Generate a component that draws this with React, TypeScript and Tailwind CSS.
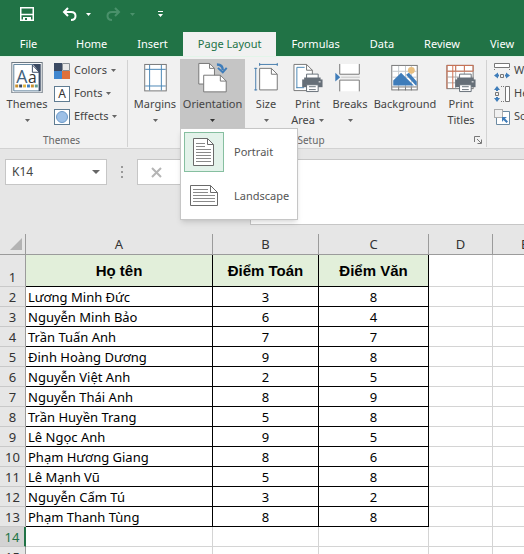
import { useState } from 'react'
import type { ReactNode } from 'react'

const tabs = ['Home', 'Insert', 'Page Layout', 'Formulas', 'Data', 'Review', 'View']

const students = [
  { name: 'Lương Minh Đức', math: 3, literature: 8 },
  { name: 'Nguyễn Minh Bảo', math: 6, literature: 4 },
  { name: 'Trần Tuấn Anh', math: 7, literature: 7 },
  { name: 'Đinh Hoàng Dương', math: 9, literature: 8 },
  { name: 'Nguyễn Việt Anh', math: 2, literature: 5 },
  { name: 'Nguyễn Thái Anh', math: 8, literature: 9 },
  { name: 'Trần Huyền Trang', math: 5, literature: 8 },
  { name: 'Lê Ngọc Anh', math: 9, literature: 5 },
  { name: 'Phạm Hương Giang', math: 8, literature: 6 },
  { name: 'Lê Mạnh Vũ', math: 5, literature: 8 },
  { name: 'Nguyễn Cẩm Tú', math: 3, literature: 2 },
  { name: 'Phạm Thanh Tùng', math: 8, literature: 8 },
]

const extraColumns = ['D', 'E', 'F', 'G', 'H', 'I', 'J', 'K', 'L', 'M']
const emptyRows = [14, 15, 16, 17, 18, 19, 20]

function Caret({ className = 'text-[#666]' }: { className?: string }) {
  return (
    <svg width="5" height="3" viewBox="0 0 5 3" className={className} fill="currentColor">
      <path d="M0 0h5L2.5 3z" />
    </svg>
  )
}

/* ---------- Ribbon icons ---------- */

function ThemesIcon() {
  return (
    <svg width="32" height="32" viewBox="0 0 32 32">
      <rect x="0.5" y="0.5" width="31" height="31" fill="#fff" stroke="#6b7680" />
      <path d="M2.5 2.5h26v27h-26z" fill="#fff" stroke="#5c7f99" />
      <path d="M22 2h8v28h-2V10z" fill="#3b4a63" />
      <path d="M21.5 3v7.5h7z" fill="#fff" stroke="#3b4a63" />
      <text x="5" y="21" fontSize="18" fill="#44627c" fontFamily="Open Sans, sans-serif">A</text>
      <text x="17" y="21" fontSize="16" fill="#333" fontFamily="Open Sans, sans-serif">a</text>
      <path d="M4 23h3v3H4z" fill="#c98f2b" />
      <path d="M8 23h3v3H8z" fill="#3b4a63" />
      <path d="M12 23h3v3h-3z" fill="#e3b53c" />
      <path d="M16 23h3v3h-3z" fill="#3f7fbf" />
      <path d="M20 23h3v3h-3z" fill="#c98f2b" />
      <path d="M24 23h3v3h-3z" fill="#5f9e8f" />
    </svg>
  )
}

function ColorsIcon() {
  return (
    <svg width="16" height="16" viewBox="0 0 16 16">
      <path d="M0 0h8v8H0z" fill="#3b4a63" />
      <path d="M8.5 .5h7v7h-7z" fill="#e9e9e9" stroke="#8a9096" />
      <path d="M0 8h8v8H0z" fill="#3f86cf" />
      <path d="M8 8h8v8H8z" fill="#e0703a" />
    </svg>
  )
}

function FontsIcon() {
  return (
    <svg width="16" height="16" viewBox="0 0 16 16">
      <rect x="0.5" y="0.5" width="15" height="15" fill="#fff" stroke="#5f7c92" />
      <text x="8" y="12" fontSize="12" textAnchor="middle" fill="#333" fontFamily="Noto Sans, sans-serif">A</text>
    </svg>
  )
}

function EffectsIcon() {
  return (
    <svg width="16" height="16" viewBox="0 0 16 16">
      <rect x="0.5" y="0.5" width="15" height="15" fill="#fff" stroke="#5f7c92" />
      <circle cx="8" cy="8" r="5.5" fill="#9dc0e6" stroke="#6d9bc9" />
    </svg>
  )
}

function MarginsIcon() {
  return (
    <svg width="32" height="32" viewBox="0 0 32 32" fill="none">
      <rect x="5.5" y="2.5" width="22" height="27" fill="#fff" stroke="#777" />
      <path d="M10.5 3v26M22.5 3v26M6 7.5h21M6 24.5h21" stroke="#4a86b5" />
    </svg>
  )
}

function OrientationIcon() {
  return (
    <svg width="32" height="32" viewBox="0 0 32 32">
      <path d="M1.5 1.5h11l5 5v16h-16z" fill="#fff" stroke="#777" />
      <path d="M12.5 1.5v5h5" fill="none" stroke="#777" />
      <path d="M6.5 13.5h17l6 6v11h-23z" fill="#fff" stroke="#777" />
      <path d="M23.5 13.5v6h6" fill="none" stroke="#777" />
      <path d="M20 2.5c4 0 6 2 6 6" fill="none" stroke="#3f7dba" strokeWidth="2.5" />
      <path d="M21 6l5 4.5L30 6" fill="none" stroke="#3f7dba" strokeWidth="2" />
    </svg>
  )
}

function SizeIcon() {
  return (
    <svg width="32" height="32" viewBox="0 0 32 32" fill="none">
      <path d="M9.5 6.5h12l6 6v16h-18z" fill="#fff" stroke="#777" />
      <path d="M21.5 6.5v6h6" stroke="#777" />
      <path d="M9 2.5h19M9.5 1v3M27.5 1v3M5.5 6v23M4 6.5h3M4 28.5h3" stroke="#4a7fae" />
    </svg>
  )
}

// Printer glyph shared by Print Area and Print Titles
function Printer() {
  return (
    <g>
      <path d="M14.5 12.5h12v7h-12z" fill="#fff" stroke="#666f78" />
      <path d="M10 18h21v8H10z" fill="#666f78" />
      <path d="M12 16h17v3H12z" fill="#666f78" />
      <path d="M27 20h2v1h-2z" fill="#fff" />
      <path d="M14.5 23.5h12v7h-12z" fill="#fff" stroke="#666f78" />
      <path d="M17 25.5h7M17 28.5h7" stroke="#666f78" />
    </g>
  )
}

function PrintAreaIcon() {
  return (
    <svg width="32" height="32" viewBox="0 0 32 32" fill="none">
      <path d="M1.5 2.5h13l6 6v21h-19z" fill="#fff" stroke="#777" />
      <path d="M14.5 2.5v6h6" stroke="#777" />
      <path d="M4.5 27V5.5h8M4 26.5h8" stroke="#4a86b5" />
      <Printer />
    </svg>
  )
}

function BreaksIcon() {
  return (
    <svg width="32" height="32" viewBox="0 0 32 32" fill="none">
      <path d="M6 2h20v11H6zM6 18h20v12H6z" fill="#fff" />
      <path d="M5.5 2v10.5h20V2M5.5 30V18.5h20V30" stroke="#777" />
      <path d="M7 15.5h19" stroke="#c5c5c5" />
      <path d="M1 11l5 4.5L1 20z" fill="#3f7dba" />
    </svg>
  )
}

function BackgroundIcon() {
  return (
    <svg width="32" height="32" viewBox="0 0 32 32" fill="none">
      <rect x="2.5" y="3.5" width="26" height="25" fill="#fff" stroke="#777" />
      <path d="M9.5 4v23M16.5 4v23M22.5 4v23M3 9.5h25M3 15.5h25" stroke="#c3c8cc" />
      <circle cx="22.5" cy="8.5" r="3.5" fill="#e8bf80" />
      <path d="M4 24v-5l8-8 13 13z" fill="#3f7dba" />
      <path d="M17 13l3-2 8 9v4h-1z" fill="#3f7dba" />
      <path d="M3 25.5h25" stroke="#777" />
      <path d="M9.5 26v3M16.5 26v3M22.5 26v3" stroke="#777" />
    </svg>
  )
}

function PrintTitlesIcon() {
  return (
    <svg width="32" height="32" viewBox="0 0 32 32" fill="none">
      <rect x="1.5" y="3.5" width="27" height="24" fill="#fff" stroke="#777" />
      <path d="M2 9.5h26M2 15.5h26M2 21.5h26M10.5 4v23M19.5 4v23" stroke="#aaa" />
      <path d="M1.5 27.5v-24h27v6h-27M7.5 4v23M10.5 4v5M19.5 4v5" stroke="#cf6f50" />
      <Printer />
    </svg>
  )
}

function WidthIcon() {
  return (
    <svg width="16" height="16" viewBox="0 0 16 16" fill="none">
      <path d="M.5.5h15v4H.5z" fill="#fff" stroke="#777" />
      <path d="M.5 6v2M15.5 6v2" stroke="#777" strokeDasharray="1 1" />
      <path d="M4 9.5L0 12.5l4 3zM12 9.5l4 3-4 3z" fill="#3f7dba" />
      <path d="M4 12.5h1M11 12.5h1" stroke="#3f7dba" strokeWidth="2" />
      <path d="M6.5 11.5h3v3h-3z" stroke="#777" />
    </svg>
  )
}

function HeightIcon() {
  return (
    <svg width="16" height="16" viewBox="0 0 16 16" fill="none">
      <path d="M11.5.5h4v15h-4z" fill="#fff" stroke="#777" />
      <path d="M7 .5h4M7 15.5h4" stroke="#777" strokeDasharray="1 1" />
      <path d="M0 4l3-4 3 4zM0 12l3 4 3-4z" fill="#3f7dba" />
      <path d="M3 4v1M3 11v1" stroke="#3f7dba" strokeWidth="2" />
      <path d="M1.5 6.5h3v3h-3z" stroke="#777" />
    </svg>
  )
}

function ScaleIcon() {
  return (
    <svg width="16" height="16" viewBox="0 0 16 16" fill="none">
      <path d="M9 2.5h6.5v13H2.5V9" fill="#fff" stroke="#6d8ba3" />
      <path d="M.5.5h8v8h-8z" fill="#f1f1f1" stroke="#666" strokeDasharray="1 1" />
      <path d="M8 8h5l-2 1.5 3 3-1.5 1.5-3-3L8 13z" fill="#3f7dba" />
    </svg>
  )
}

function PortraitIcon() {
  return (
    <svg width="30" height="30" viewBox="0 0 30 30" fill="none">
      <path d="M4.5 1.5h14l6 6v21h-20z" fill="#fff" stroke="#6a6a6a" />
      <path d="M18.5 1.5v6h6" stroke="#6a6a6a" />
      <path d="M7 6.5h9M7 9.5h9M7 12.5h15M7 15.5h15M7 18.5h15M7 21.5h15M7 24.5h15" stroke="#8a8a8a" />
    </svg>
  )
}

function LandscapeIcon() {
  return (
    <svg width="30" height="30" viewBox="0 0 30 30" fill="none">
      <path d="M1.5 4.5h20l7 7v13h-27z" fill="#fff" stroke="#6a6a6a" />
      <path d="M21.5 4.5v7h7" stroke="#6a6a6a" />
      <path d="M4 8.5h15M4 11.5h15M4 14.5h22M4 17.5h22M4 20.5h22" stroke="#8a8a8a" />
    </svg>
  )
}

/* ---------- Ribbon ---------- */

interface LargeButtonProps {
  icon: ReactNode
  label: string
  secondLine?: string
  caret?: boolean
  className?: string
  pressed?: boolean
  onClick?: () => void
}

function LargeButton({ icon, label, secondLine, caret, className = '', pressed, onClick }: LargeButtonProps) {
  return (
    <button
      type="button"
      onClick={onClick}
      aria-expanded={pressed}
      className={`flex h-[69px] shrink-0 flex-col items-center pt-[3px] ${pressed ? 'bg-[#c5c5c5]' : ''} ${className}`}
    >
      {icon}
      <span className="mt-[3px] leading-4">{label}</span>
      <span className="flex h-4 items-center gap-1 leading-4">
        {secondLine}
        {caret && <Caret className={pressed ? 'text-[#333]' : 'text-[#666]'} />}
      </span>
    </button>
  )
}

function SmallButton({ icon, label, caret }: { icon: ReactNode; label: string; caret?: boolean }) {
  return (
    <button type="button" className="flex h-[23px] items-center gap-1">
      {icon}
      <span>{label}</span>
      {caret && <Caret />}
    </button>
  )
}

function OrientationMenu({ value, onSelect }: { value: string; onSelect: (value: string) => void }) {
  const items = [
    { name: 'Portrait', icon: <PortraitIcon /> },
    { name: 'Landscape', icon: <LandscapeIcon /> },
  ]

  return (
    <div
      role="menu"
      className="absolute top-full left-0 z-20 flex w-[118px] flex-col gap-1 border border-[#c6c6c6] bg-white p-[3px] shadow-md"
    >
      {items.map(item => (
        <button
          key={item.name}
          type="button"
          role="menuitemradio"
          aria-checked={value === item.name}
          onClick={() => onSelect(item.name)}
          className="flex items-center gap-[10px] text-[#555]"
        >
          <span
            className={`flex size-10 shrink-0 items-center justify-center border ${
              value === item.name ? 'border-[#86bfa0] bg-[#e3f2ea]' : 'border-transparent'
            }`}
          >
            {item.icon}
          </span>
          {item.name}
        </button>
      ))}
    </div>
  )
}

function Ribbon() {
  const [menuOpen, setMenuOpen] = useState(true)
  const [orientation, setOrientation] = useState('Portrait')

  return (
    <div className="flex h-[93px] border-t border-b border-t-[#e2f5e9] border-b-[#d2d2d2] bg-[#f1f1f1] pt-[2px] text-[11px] text-[#444]">
      {/* Themes */}
      <section className="my-px flex w-32 shrink-0 flex-col border-r border-[#d2d2d2]">
        <div className="-mt-px flex">
          <LargeButton icon={<ThemesIcon />} label="Themes" caret className="w-[54px]" />
          <div className="flex flex-col">
            <SmallButton icon={<ColorsIcon />} label="Colors" caret />
            <SmallButton icon={<FontsIcon />} label="Fonts" caret />
            <SmallButton icon={<EffectsIcon />} label="Effects" caret />
          </div>
        </div>
        <div className="mt-1 pr-1 text-center text-[10px] leading-4 text-[#666]">Themes</div>
      </section>

      {/* Page Setup */}
      <section className="my-px flex w-[359px] shrink-0 flex-col border-r border-[#d2d2d2] pl-[2px]">
        <div className="-mt-px flex">
          <LargeButton icon={<MarginsIcon />} label="Margins" caret className="w-[50px]" />
          <div className="relative">
            <LargeButton
              icon={<OrientationIcon />}
              label="Orientation"
              caret
              pressed={menuOpen}
              onClick={() => setMenuOpen(o => !o)}
              className="w-[65px]"
            />
            {menuOpen && <OrientationMenu value={orientation} onSelect={setOrientation} />}
          </div>
          <LargeButton icon={<SizeIcon />} label="Size" caret className="w-[42px]" />
          <LargeButton icon={<PrintAreaIcon />} label="Print" secondLine="Area" caret className="w-[41px]" />
          <LargeButton icon={<BreaksIcon />} label="Breaks" caret className="w-[44px]" />
          <LargeButton icon={<BackgroundIcon />} label="Background" className="w-[66px]" />
          <LargeButton icon={<PrintTitlesIcon />} label="Print" secondLine="Titles" className="w-[46px]" />
        </div>
        <div className="mt-1 flex items-center pr-1 text-[10px] leading-4 text-[#666]">
          <span className="flex-1 pr-2 text-center">Page Setup</span>
          <button type="button" aria-label="Page Setup dialog">
            <svg width="8" height="8" viewBox="0 0 8 8" fill="none" stroke="#777">
              <path d="M.5 6V.5H6M3 3l4 4M7.5 3.5v4h-4" />
            </svg>
          </button>
        </div>
      </section>

      {/* Scale to Fit */}
      <section className="flex w-40 shrink-0 flex-col pl-[7px]">
        <SmallButton icon={<WidthIcon />} label="Width:" />
        <SmallButton icon={<HeightIcon />} label="Height:" />
        <SmallButton icon={<ScaleIcon />} label="Scale:" />
      </section>
    </div>
  )
}

/* ---------- Title bar and tabs ---------- */

function TitleBar() {
  return (
    <div className="flex h-7 items-center pl-5 text-white">
      <button type="button" aria-label="Save">
        <svg width="14" height="14" viewBox="0 0 14 14" fill="none" stroke="currentColor">
          <path d="M.75.75h12.5v12.5H.75z" strokeWidth="1.5" />
          <path d="M1 7.5h12" strokeWidth="1.5" />
          <path d="M3 10h8v3H3z" fill="currentColor" stroke="none" />
          <path d="M5 11h2v2H5z" fill="#217346" stroke="none" />
        </svg>
      </button>
      <button type="button" aria-label="Undo" className="ml-7 flex items-center gap-[9px]">
        <svg width="15" height="14" viewBox="0 0 15 14" fill="none" stroke="currentColor" strokeWidth="2">
          <path d="M6 1L2 5l4 4M2 5h7c3 0 4.5 1.5 4.5 4S12 13 9 13" />
        </svg>
        <Caret className="text-white" />
      </button>
      <button type="button" aria-label="Redo" disabled className="ml-[15px] flex items-center gap-[9px] text-[#4a916b]">
        <svg width="15" height="14" viewBox="0 0 15 14" fill="none" stroke="currentColor" strokeWidth="2">
          <path d="M9 1l4 4-4 4M13 5H6C3 5 1.5 6.5 1.5 9S3 13 6 13" />
        </svg>
        <Caret className="text-[#4a916b]" />
      </button>
      <button type="button" aria-label="Customize Quick Access Toolbar" className="ml-[23px]">
        <svg width="5" height="6" viewBox="0 0 5 6" fill="currentColor">
          <path d="M0 0h5v1H0zM0 3h5L2.5 6z" />
        </svg>
      </button>
    </div>
  )
}

function TabBar() {
  const [active, setActive] = useState('Page Layout')

  return (
    <nav className="mt-1 flex h-6 text-[11px] text-white">
      <button type="button" className="w-[61px] shrink-0 pr-1">File</button>
      {tabs.map(tab => (
        <button
          key={tab}
          type="button"
          onClick={() => setActive(tab)}
          className={`shrink-0 px-[15px] ${tab === active ? 'bg-[#f1f1f1] text-[#217346]' : ''}`}
        >
          {tab}
        </button>
      ))}
    </nav>
  )
}

/* ---------- Formula bar ---------- */

function FormulaBar() {
  return (
    <div className="flex h-[85px] items-start bg-[#e6e6e6] pt-[10px] pl-[5px]">
      <div className="flex h-[26px] w-[102px] shrink-0 items-center border border-[#c6c6c6] bg-white pr-[6px]">
        <input
          aria-label="Name box"
          defaultValue="K14"
          className="w-full min-w-0 pl-[6px] text-[#444] outline-none"
        />
        <button type="button" aria-label="Show names">
          <svg width="8" height="4" viewBox="0 0 8 4" fill="#666">
            <path d="M0 0h8L4 4z" />
          </svg>
        </button>
      </div>
      <svg width="30" height="26" viewBox="0 0 30 26" fill="#999" className="shrink-0">
        <path d="M14 7h2v2h-2zM14 12h2v2h-2zM14 17h2v2h-2z" />
      </svg>
      <div className="flex h-[26px] w-[109px] shrink-0 items-center border border-[#c6c6c6] bg-white pl-[13px]">
        <button type="button" aria-label="Cancel">
          <svg width="11" height="11" viewBox="0 0 11 11" fill="none" stroke="#b5b5b5" strokeWidth="2">
            <path d="M1 1l9 9M10 1l-9 9" />
          </svg>
        </button>
      </div>
      <textarea
        aria-label="Formula"
        className="ml-1 h-[66px] min-w-0 flex-1 resize-none border-y border-l border-[#c6c6c6] bg-white px-2 outline-none"
      />
    </div>
  )
}

/* ---------- Worksheet ---------- */

function RowHeader({ row, active }: { row: number; active?: boolean }) {
  return (
    <th
      scope="row"
      className={`border-b border-b-[#c9c9c9] p-0 pt-px text-center align-bottom font-normal ${
        active
          ? 'border-r-2 border-r-[#217346] bg-[#d3d3d3] text-[#217346]'
          : 'border-r border-r-[#9b9b9b] bg-[#e6e6e6] text-[#333]'
      }`}
    >
      {row}
    </th>
  )
}

function EmptyCells({ columns }: { columns: string[] }) {
  return columns.map(column => <td key={column} className="border-r border-b border-[#d4d4d4]" />)
}

function Sheet() {
  const headings = ['Họ tên', 'Điểm Toán', 'Điểm Văn']
  const columns = ['A', 'B', 'C', ...extraColumns]

  return (
    <div className="min-h-0 flex-1 overflow-hidden">
      <table className="w-max border-separate border-spacing-0 text-[13px] leading-[18px] text-black">
        <colgroup>
          <col className="w-[26px]" />
          <col className="w-[187px]" />
          <col className="w-[106px]" />
          <col className="w-[110px]" />
          {extraColumns.map(column => (
            <col key={column} className="w-16" />
          ))}
        </colgroup>
        <thead>
          <tr className="h-[21px] bg-[#e6e6e6] text-[#333]">
            <td className="border-r border-b border-[#9b9b9b] p-0">
              <svg width="12" height="12" viewBox="0 0 12 12" className="ml-[10px]">
                <path d="M12 0v12H0z" fill="#b3b3b3" />
              </svg>
            </td>
            {columns.map(column => (
              <th key={column} scope="col" className="border-r border-b border-[#9b9b9b] p-0 font-normal">
                {column}
              </th>
            ))}
          </tr>
        </thead>
        <tbody>
          <tr className="h-8">
            <RowHeader row={1} />
            {headings.map(heading => (
              <td
                key={heading}
                className="border-r border-b border-black bg-[#e2efda] p-0 text-center font-['Liberation_Sans',sans-serif] text-[15px] font-bold"
              >
                {heading}
              </td>
            ))}
            <EmptyCells columns={extraColumns} />
          </tr>
          {students.map((student, i) => (
            <tr key={student.name} className="h-5">
              <RowHeader row={i + 2} />
              <td className="border-r border-b border-black p-0 pt-px pl-[2px]">{student.name}</td>
              <td className="border-r border-b border-black p-0 pt-px text-center">{student.math}</td>
              <td className="border-r border-b border-black p-0 pt-px text-center">{student.literature}</td>
              <EmptyCells columns={extraColumns} />
            </tr>
          ))}
          {emptyRows.map(row => (
            <tr key={row} className="h-5">
              <RowHeader row={row} active={row === 14} />
              <EmptyCells columns={columns} />
            </tr>
          ))}
        </tbody>
      </table>
    </div>
  )
}

export default function App() {
  return (
    <div className="flex h-screen flex-col overflow-hidden bg-white font-['Noto_Sans',sans-serif] text-[12px] whitespace-nowrap">
      <header className="flow-root bg-[#217346]">
        <TitleBar />
        <TabBar />
      </header>
      <Ribbon />
      <FormulaBar />
      <Sheet />
    </div>
  )
}
